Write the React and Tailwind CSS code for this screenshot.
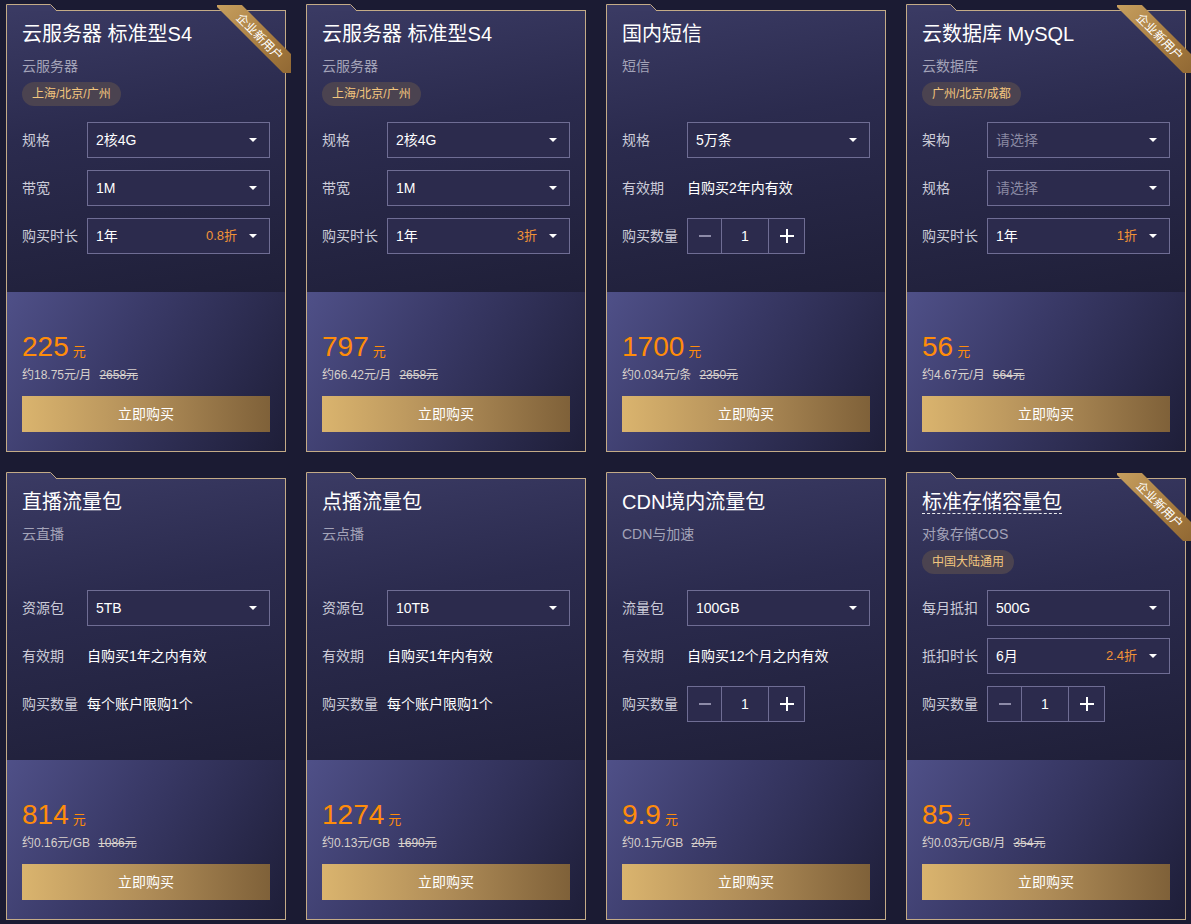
import React from "react";

const cards = [
  {
    title: "云服务器 标准型S4",
    sub: "云服务器",
    tag: "上海/北京/广州",
    ribbon: true,
    rows: [
      { type: "select", label: "规格", value: "2核4G" },
      { type: "select", label: "带宽", value: "1M" },
      { type: "select", label: "购买时长", value: "1年", discount: "0.8折" },
    ],
    price: "225",
    per: "约18.75元/月",
    orig: "2658元",
  },
  {
    title: "云服务器 标准型S4",
    sub: "云服务器",
    tag: "上海/北京/广州",
    rows: [
      { type: "select", label: "规格", value: "2核4G" },
      { type: "select", label: "带宽", value: "1M" },
      { type: "select", label: "购买时长", value: "1年", discount: "3折" },
    ],
    price: "797",
    per: "约66.42元/月",
    orig: "2658元",
  },
  {
    title: "国内短信",
    sub: "短信",
    rows: [
      { type: "select", label: "规格", value: "5万条" },
      { type: "text", label: "有效期", value: "自购买2年内有效" },
      { type: "stepper", label: "购买数量" },
    ],
    price: "1700",
    per: "约0.034元/条",
    orig: "2350元",
  },
  {
    title: "云数据库 MySQL",
    sub: "云数据库",
    tag: "广州/北京/成都",
    ribbon: true,
    rows: [
      { type: "select", label: "架构", value: "请选择", placeholder: true },
      { type: "select", label: "规格", value: "请选择", placeholder: true },
      { type: "select", label: "购买时长", value: "1年", discount: "1折" },
    ],
    price: "56",
    per: "约4.67元/月",
    orig: "564元",
  },
  {
    title: "直播流量包",
    sub: "云直播",
    rows: [
      { type: "select", label: "资源包", value: "5TB" },
      { type: "text", label: "有效期", value: "自购买1年之内有效" },
      { type: "text", label: "购买数量", value: "每个账户限购1个" },
    ],
    price: "814",
    per: "约0.16元/GB",
    orig: "1086元",
  },
  {
    title: "点播流量包",
    sub: "云点播",
    rows: [
      { type: "select", label: "资源包", value: "10TB" },
      { type: "text", label: "有效期", value: "自购买1年内有效" },
      { type: "text", label: "购买数量", value: "每个账户限购1个" },
    ],
    price: "1274",
    per: "约0.13元/GB",
    orig: "1690元",
  },
  {
    title: "CDN境内流量包",
    sub: "CDN与加速",
    rows: [
      { type: "select", label: "流量包", value: "100GB" },
      { type: "text", label: "有效期", value: "自购买12个月之内有效" },
      { type: "stepper", label: "购买数量" },
    ],
    price: "9.9",
    per: "约0.1元/GB",
    orig: "20元",
  },
  {
    title: "标准存储容量包",
    dashed: true,
    sub: "对象存储COS",
    tag: "中国大陆通用",
    ribbon: true,
    rows: [
      { type: "select", label: "每月抵扣", value: "500G" },
      { type: "select", label: "抵扣时长", value: "6月", discount: "2.4折" },
      { type: "stepper", label: "购买数量" },
    ],
    price: "85",
    per: "约0.03元/GB/月",
    orig: "354元",
  },
];

function Arrow() {
  return (
    <span className="block w-0 h-0 border-l-[4px] border-r-[4px] border-t-[4px] border-l-transparent border-r-transparent border-t-white" />
  );
}

function Row({ row }) {
  return (
    <div className="flex h-9 items-center">
      <div className="w-[65px] shrink-0 text-[14px] leading-5 text-[#cbcbd8]">{row.label}</div>
      {row.type === "select" && (
        <div className="flex h-9 flex-1 items-center justify-between border border-[#6f6d94] bg-[#2c2b4d] pl-2 pr-3">
          <span className={"text-[14px] leading-5 " + (row.placeholder ? "text-[#8a89a3]" : "text-white")}>
            {row.value}
          </span>
          <span className="flex items-center">
            {row.discount && <span className="mr-3 text-[13px] leading-5 text-[#f39437]">{row.discount}</span>}
            <Arrow />
          </span>
        </div>
      )}
      {row.type === "text" && <div className="text-[14px] leading-5 text-white">{row.value}</div>}
      {row.type === "stepper" && (
        <div className="flex h-9 shrink-0 border border-[#6f6d94] bg-[#2c2b4d]">
          <div className="flex w-[34px] shrink-0 items-center justify-center border-r border-[#6f6d94]">
            <span className="block h-[2px] w-3 bg-[#8d8ba8]" />
          </div>
          <div className="flex w-[47px] shrink-0 items-center justify-center border-r border-[#6f6d94] text-[14px] text-white">
            1
          </div>
          <div className="relative flex w-[35px] shrink-0 items-center justify-center">
            <span className="absolute h-[2px] w-[14px] bg-white" />
            <span className="absolute h-[14px] w-[2px] bg-white" />
          </div>
        </div>
      )}
    </div>
  );
}

function Card({ c }) {
  return (
    <div className="pt-[6px]">
      <div className="relative flex h-[442px] flex-col border border-[#c4ab87]">
        <svg className="absolute left-[-1px] top-[-7px] z-10" width="60" height="9" viewBox="0 0 60 9">
          <path d="M1 1 H44.5 L50.5 7 H1 Z" fill="#3a3a63" />
          <path d="M0.5 9 V0.5 H44.5 L51 7" fill="none" stroke="#c4ab87" strokeWidth="1" />
        </svg>
        {c.ribbon && (
          <div className="pointer-events-none absolute right-[-6px] top-[-6px] z-20 h-[68px] w-[74px] overflow-hidden">
            <div className="absolute left-[-12px] top-[22px] flex h-[19px] w-[110px] rotate-45 items-center justify-center bg-[linear-gradient(90deg,#c7a060,#a57a3e_60%,#8d6532)] text-[12px] leading-none text-white">
              企业新用户
            </div>
          </div>
        )}
        <div className="h-[281px] bg-[linear-gradient(170deg,#3a3a63_0%,#2b2b4e_40%,#1f1f38_100%)] px-[15px] pt-[9px]">
          <div className="h-[102px]">
            <div className="text-[20px] leading-[28px] text-white">
              {c.dashed ? (
                <span className="inline-block border-b border-dashed border-white/90 leading-[22px]">{c.title}</span>
              ) : (
                c.title
              )}
            </div>
            <div className="mt-2 text-[14px] leading-5 text-[#a3a3b8]">{c.sub}</div>
            {c.tag && (
              <div className="mt-[6px] inline-flex h-6 items-center rounded-full bg-[#4b4350] px-[10px] text-[12px] text-[#f3c67e]">
                {c.tag}
              </div>
            )}
          </div>
          <div className="flex flex-col gap-3">
            {c.rows.map((r, i) => (
              <Row key={i} row={r} />
            ))}
          </div>
        </div>
        <div className="flex-1 bg-[linear-gradient(120deg,#4f5088_0%,#3a3a68_40%,#1e1e38_100%)] px-[15px] pt-[37px]">
          <div className="flex items-baseline text-[#ff8c0a]">
            <span className="text-[28px] leading-[36px]">{c.price}</span>
            <span className="ml-1 text-[13px]">元</span>
          </div>
          <div className="mt-[1px] flex text-[12px] leading-[18px] text-[#d8d1cc]">
            <span>{c.per}</span>
            <span className="ml-2 line-through">{c.orig}</span>
          </div>
          <div className="mt-3 flex h-9 items-center justify-center bg-[linear-gradient(90deg,#dab46e,#b08d58_50%,#7f6139)] text-[14px] text-white">
            立即购买
          </div>
        </div>
      </div>
    </div>
  );
}

export default function App() {
  return (
    <div className="h-[924px] w-full overflow-hidden bg-[#1b1b33] font-['Liberation_Sans','Noto_Sans_CJK_SC',sans-serif]">
      <div className="grid grid-cols-[repeat(4,280px)] gap-5 pl-[6px] pt-1">
        {cards.map((c, i) => (
          <Card key={i} c={c} />
        ))}
      </div>
    </div>
  );
}
